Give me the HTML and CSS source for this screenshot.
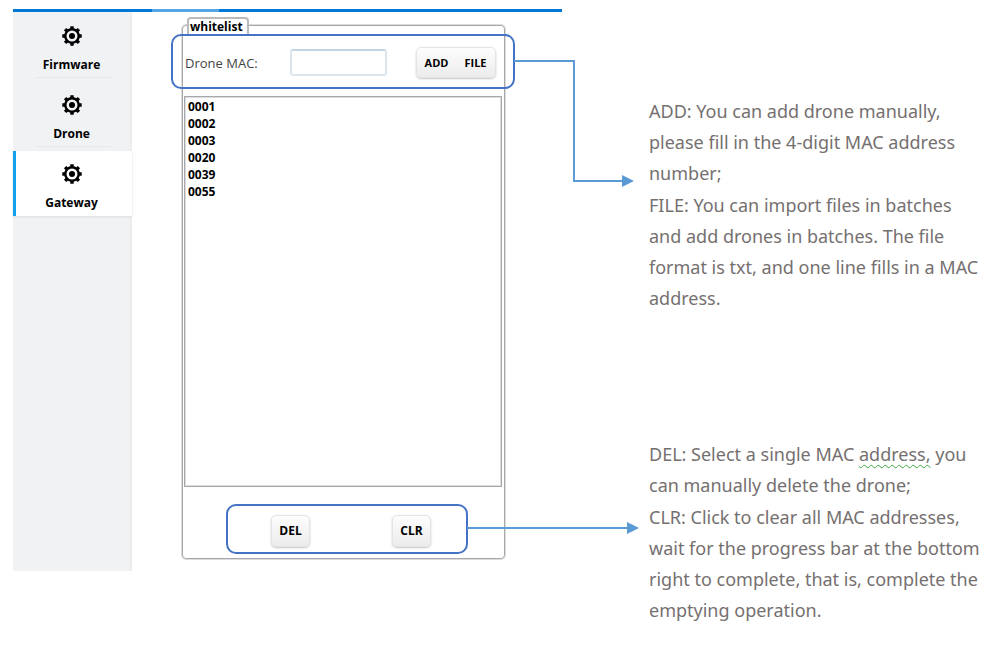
FILE: index.html
```html
<!DOCTYPE html>
<html lang="en">
<head>
<meta charset="utf-8">
<title>Gateway whitelist</title>
<link rel="stylesheet" href="styles.css">
</head>
<body>
<svg class="defs" aria-hidden="true">
  <symbol id="gear" viewBox="0 0 20 20">
    <circle cx="10" cy="10" r="6.7" fill="none" stroke="currentColor" stroke-width="2.4"/>
    <circle cx="10" cy="10" r="3" fill="currentColor"/>
    <g stroke="currentColor" stroke-width="3.4">
      <path d="M10 .3v3M10 16.7v3M.3 10h3M16.7 10h3M3.1 3.1l2.2 2.2M14.7 14.7l2.2 2.2M3.1 16.9l2.2-2.2M14.7 5.3l2.2-2.2"/>
    </g>
  </symbol>
</svg>
<main class="page">
  <section class="app">
    <div class="topbar"><span class="topbar-tab"></span></div>
    <div class="app-body">
      <nav class="sidebar">
        <a class="nav-item" href="#firmware"><svg class="gear"><use href="#gear"/></svg>Firmware</a>
        <a class="nav-item" href="#drone"><svg class="gear"><use href="#gear"/></svg>Drone</a>
        <a class="nav-item active" href="#gateway"><svg class="gear"><use href="#gear"/></svg>Gateway</a>
      </nav>
      <fieldset class="panel">
        <legend>whitelist</legend>
        <div class="entry">
          <label for="mac">Drone MAC:</label>
          <input id="mac" type="text">
          <div class="group">
            <button type="button">ADD</button>
            <button type="button">FILE</button>
          </div>
          <div class="callout">
            <svg class="link link-entry" viewBox="0 0 120 130" aria-hidden="true">
              <path d="M0 6H60V126H110" fill="none" stroke="#5b9bd5" stroke-width="2"/>
              <path d="M108 120L120 126L108 132Z" fill="#5b9bd5"/>
            </svg>
          </div>
        </div>
        <select class="list" size="6" aria-label="Drone MAC addresses">
          <option>0001</option>
          <option>0002</option>
          <option>0003</option>
          <option>0020</option>
          <option>0039</option>
          <option>0055</option>
        </select>
        <div class="actions">
          <button type="button">DEL</button>
          <button type="button">CLR</button>
          <svg class="link link-actions" viewBox="0 0 172 12" aria-hidden="true">
            <path d="M0 6H162" stroke="#5b9bd5" stroke-width="2"/>
            <path d="M160 0L172 6L160 12Z" fill="#5b9bd5"/>
          </svg>
        </div>
      </fieldset>
    </div>
  </section>
  <aside class="notes">
    <div class="note">
      <p>ADD: You can add drone manually,<br>please fill in the 4-digit MAC address<br>number;</p>
      <p>FILE: You can import files in batches<br>and add drones in batches. The file<br>format is txt, and one line fills in a MAC<br>address.</p>
    </div>
    <div class="note">
      <p>DEL: Select a single MAC <span class="flagged">address,</span> you<br>can manually delete the drone;</p>
      <p>CLR: Click to clear all MAC addresses,<br>wait for the progress bar at the bottom<br>right to complete, that is, complete the<br>emptying operation.</p>
    </div>
  </aside>
</main>
</body>
</html>
```
FILE: styles.css
```css
* {
  box-sizing: border-box;
}

body {
  margin: 0;
  background: #fff;
  color: #000;
  font: bold 12px/16px "Open Sans", "Noto Sans", sans-serif;
}

.defs {
  position: absolute;
  width: 0;
  height: 0;
}

.page {
  display: grid;
  grid-template-columns: minmax(0, 1fr) 346px;
  padding: 9px 0 0 13px;
}

.app {
  margin-right: 87px;
}

.topbar {
  display: flex;
  height: 3px;
  padding-left: 139px;
  background: #0078d7;
}

.topbar-tab {
  width: 67px;
  background: #55a5e6;
}

.app-body {
  display: flex;
}

.sidebar {
  flex: none;
  width: 119px;
  min-height: 559px;
  padding-top: 1px;
  background: #f0f2f4;
  border-right: 2px solid #ebedef;
}

.nav-item {
  display: flex;
  flex-direction: column;
  align-items: center;
  gap: 11px;
  height: 65px;
  margin: 0 -2px 4px 0;
  padding: 13px 2px 0 0;
  color: #000;
  text-decoration: none;
  background: linear-gradient(#e6e8ea, #e6e8ea) 50% 100% / 76px 1px no-repeat;
}

.nav-item.active {
  background: #fff;
  border-left: 3px solid #10a0f0;
  padding-right: 5px;
  box-shadow: 0 1px 2px #ddd;
}

.gear {
  width: 20px;
  height: 20px;
}

.panel {
  flex: 1;
  display: flex;
  flex-direction: column;
  min-width: 0;
  margin: 5px 57px 12px 50px;
  padding: 0 2px 4px 1px;
  border: 1px solid #a6a8aa;
  border-radius: 4px;
  box-shadow: 0 0 0 1px #dcdcde;
}

legend {
  height: 17px;
  margin-left: 3px;
  padding: 0 4px 0 1px;
  line-height: 15px;
  background: #fff;
  border: 2px solid #b8babc;
  border-bottom: 0;
  border-radius: 4px 4px 0 0;
}

.entry {
  position: relative;
  display: flex;
  align-items: center;
  height: 55px;
  padding: 2px 6px 0 1px;
}

.entry label {
  color: #444;
  font-size: 13px;
  font-weight: 400;
  width: 105px;
}

.entry input {
  width: 97px;
  height: 27px;
  padding: 0 4px;
  border: 2px solid #dbe5ee;
  border-top-color: #c3d5e2;
  border-radius: 3px;
  font: inherit;
}

.group,
.actions button {
  background: linear-gradient(#fdfdfd, #ececec);
  border: 1px solid #e4e4e4;
  border-radius: 5px;
  box-shadow: 0 1px 2px #c4c4c4;
}

.group {
  display: flex;
  height: 31px;
  margin-left: auto;
}

button {
  padding: 0;
  border: 0;
  background: none;
  color: #000;
  font: inherit;
}

.group button {
  width: 39px;
  font-size: 11px;
}

.callout {
  position: absolute;
  inset: 0 -13px;
  border: 2px solid #4472c4;
  border-radius: 10px;
  pointer-events: none;
}

.list {
  height: 391px;
  margin-top: 7px;
  padding: 1px 0;
  background: #fff;
  color: #000;
  border: 1px solid #a6a8aa;
  border-radius: 0;
  box-shadow: inset 0 0 0 1px #dcdcde;
  font: inherit;
  overflow: hidden;
  outline: 0;
}

.list option {
  height: 17px;
  padding: 0 3px;
  font-weight: 700;
  line-height: 17px;
}

.actions {
  position: relative;
  display: flex;
  justify-content: center;
  align-items: center;
  gap: 82px;
  height: 50px;
  margin: 17px 34px 0 42px;
  padding: 4px 0 0 8px;
  border: 2px solid #4472c4;
  border-radius: 10px;
}

.actions button {
  width: 39px;
  height: 32px;
}

.link {
  position: absolute;
  left: 100%;
  margin-left: 1px;
  overflow: visible;
}

.link-entry {
  top: 19px;
  width: 120px;
  height: 130px;
}

.link-actions {
  top: 16px;
  width: 172px;
  height: 12px;
}

.notes {
  color: #757070;
  font: 400 18px/31px "Noto Sans", "Open Sans", sans-serif;
  white-space: nowrap;
}

.note {
  padding-top: 87px;
}

.note + .note {
  padding-top: 124px;
}

.note p {
  margin: 0 0 1px;
}

.flagged {
  text-decoration: underline wavy #3fa648 1px;
  text-underline-offset: 3px;
}
```
